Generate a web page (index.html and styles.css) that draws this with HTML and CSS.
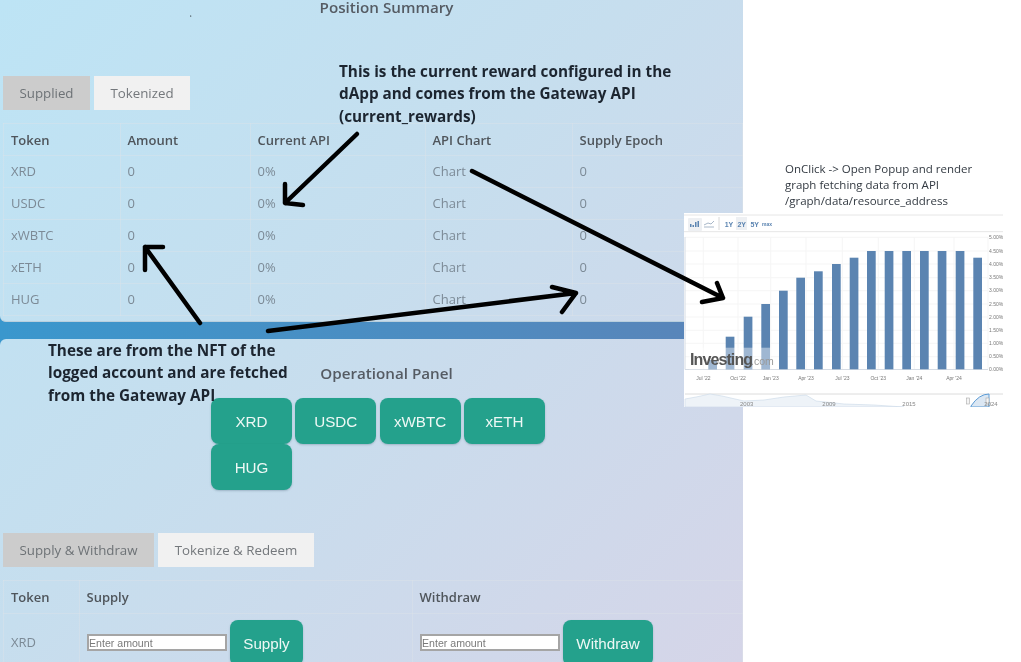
FILE: index.html
```html
<!DOCTYPE html>
<html lang="en">
<head>
<meta charset="utf-8">
<title>Position Summary</title>
<link rel="stylesheet" href="styles.css">
</head>
<body>
<div class="screen">
  <main class="app">
    <section class="card card-summary">
      <h2 class="card-title title-summary">Position Summary</h2>
      <div class="tabs">
        <button class="tab tab-active tab-supplied">Supplied</button>
        <button class="tab tab-tokenized">Tokenized</button>
      </div>
      <table class="grid">
        <colgroup><col class="c1"><col class="c2"><col class="c3"><col class="c4"><col></colgroup>
        <thead><tr><th>Token</th><th>Amount</th><th>Current API</th><th>API Chart</th><th>Supply Epoch</th></tr></thead>
        <tbody>
          <tr><td>XRD</td><td>0</td><td>0%</td><td>Chart</td><td>0</td></tr>
          <tr><td>USDC</td><td>0</td><td>0%</td><td>Chart</td><td>0</td></tr>
          <tr><td>xWBTC</td><td>0</td><td>0%</td><td>Chart</td><td>0</td></tr>
          <tr><td>xETH</td><td>0</td><td>0%</td><td>Chart</td><td>0</td></tr>
          <tr><td>HUG</td><td>0</td><td>0%</td><td>Chart</td><td>0</td></tr>
        </tbody>
      </table>
    </section>
    <section class="card card-ops">
      <h2 class="card-title title-ops">Operational Panel</h2>
      <div class="token-buttons">
        <button class="action token">XRD</button>
        <button class="action token">USDC</button>
        <button class="action token">xWBTC</button>
        <button class="action token">xETH</button>
        <button class="action token">HUG</button>
      </div>
      <div class="tabs tabs-ops">
        <button class="tab tab-active tab-supply">Supply &amp; Withdraw</button>
        <button class="tab tab-tokenize">Tokenize &amp; Redeem</button>
      </div>
      <table class="grid grid-ops">
        <colgroup><col class="o1"><col class="o2"><col></colgroup>
        <thead><tr><th>Token</th><th>Supply</th><th>Withdraw</th></tr></thead>
        <tbody>
          <tr>
            <td>XRD</td>
            <td><div class="entry"><input class="amount" type="text" placeholder="Enter amount"><button class="action act-supply">Supply</button></div></td>
            <td><div class="entry"><input class="amount" type="text" placeholder="Enter amount"><button class="action act-withdraw">Withdraw</button></div></td>
          </tr>
        </tbody>
      </table>
    </section>
  </main>

  <p class="note note-reward">This is the current reward configured in the<br>dApp and comes from the Gateway API<br>(current_rewards)</p>
  <p class="note note-nft">These are from the NFT of the<br>logged account and are fetched<br>from the Gateway API</p>
  <p class="note-click">OnClick -&gt; Open Popup and render<br>graph fetching data from API<br>/graph/data/resource_address</p>

  <svg class="chart" width="319" height="194" viewBox="0 0 319 194" aria-label="Interest rate bar chart">
    <rect width="319" height="194" fill="#fff"/>
    <path d="M0 2H319M0 18.700H319" stroke="#e6e6e6" stroke-width="1"/>
    <rect x="4" y="5" width="14" height="13" rx="1" fill="#eef0f3"/>
    <path d="M6 14V11H7.500V14ZM8.500 14V12H10V14ZM11 14V9H12.500V14ZM13.500 14V8H15V14Z" fill="#5b84b1"/>
    <path d="M20 14H30M20 12L24 10L27 11L30 8" stroke="#a9b8c9" stroke-width="1" fill="none"/>
    <path d="M35 4V17" stroke="#d8d8d8" stroke-width="1"/>
    <rect x="52" y="4" width="11" height="13" fill="#eef0f3"/>
    <g class="chart-tool">
      <text x="45" y="13.500" text-anchor="middle">1Y</text>
      <text x="57.700" y="13.500" text-anchor="middle">2Y</text>
      <text x="70.700" y="13.500" text-anchor="middle">5Y</text>
      <text class="chart-tool-small" x="83" y="13" text-anchor="middle">max</text>
    </g>
    <path class="chart-gridline" d="M1 24.300H304M1 38H304M1 51H304M1 64.700H304M1 77.700H304M1 91H304M1 104H304M1 117.300H304M1 130.300H304M1 143.700H304"/>
    <path class="chart-gridline" d="M19.300 24V156M54 24V156M86.700 24V156M122 24V156M158.300 24V156M194.300 24V156M230.300 24V156M270 24V156M304 24V156"/>
    <path d="M1 24V156.500H304" stroke="#d6dce4" stroke-width="1" fill="none"/>
    <g fill="#5b84b1">
      <rect x="24.300" y="147" width="8.700" height="9.300"/>
      <rect x="41.700" y="123.700" width="8.700" height="32.600"/>
      <rect x="59.700" y="103.700" width="8.700" height="52.600"/>
      <rect x="77.300" y="91" width="8.700" height="65.300"/>
      <rect x="95" y="77.700" width="8.700" height="78.600"/>
      <rect x="112.300" y="64.700" width="8.700" height="91.600"/>
      <rect x="130" y="58.300" width="8.700" height="98"/>
      <rect x="148" y="51" width="8.700" height="105.300"/>
      <rect x="165.700" y="44.700" width="8.700" height="111.600"/>
      <rect x="183" y="38" width="8.700" height="118.300"/>
      <rect x="200.700" y="38" width="8.700" height="118.300"/>
      <rect x="218.300" y="38" width="8.700" height="118.300"/>
      <rect x="236" y="38" width="8.700" height="118.300"/>
      <rect x="253.700" y="38" width="8.700" height="118.300"/>
      <rect x="271.700" y="38" width="8.700" height="118.300"/>
      <rect x="289.300" y="44.700" width="8.700" height="111.600"/>
    </g>
    <rect x="5" y="134.700" width="82" height="21.600" fill="#fff" fill-opacity=".42"/>
    <text class="logo" x="6" y="152">Investing</text>
    <text class="logo-com" x="67" y="152">.com</text>
    <g class="chart-axis" text-anchor="start">
      <text x="305" y="26">5.00%</text><text x="305" y="39.700">4.50%</text><text x="305" y="52.700">4.00%</text><text x="305" y="66.300">3.50%</text><text x="305" y="79.300">3.00%</text><text x="305" y="92.700">2.50%</text><text x="305" y="105.700">2.00%</text><text x="305" y="119">1.50%</text><text x="305" y="132">1.00%</text><text x="305" y="145.300">0.50%</text><text x="305" y="158">0.00%</text>
    </g>
    <g class="chart-axis" text-anchor="middle">
      <text x="19.300" y="167">Jul '22</text><text x="54" y="167">Oct '22</text><text x="86.700" y="167">Jan '23</text><text x="122" y="167">Apr '23</text><text x="158.300" y="167">Jul '23</text><text x="194.300" y="167">Oct '23</text><text x="230.300" y="167">Jan '24</text><text x="270" y="167">Apr '24</text>
    </g>
    <path d="M1 181H319" stroke="#dcdcdc" stroke-width="1"/>
    <path d="M1 186L12 184L26 181L38 183L60 188L80 187L100 184L122 182L132 188L160 191L190 192L220 194V194H1Z" fill="#eef3f8" stroke="#c9d8e8" stroke-width=".6"/>
    <path d="M287 193Q295 181 305 181V194H287Z" fill="#dbe7f3" stroke="#5b9bd5" stroke-width="1"/>
    <rect x="282.500" y="185" width="3" height="6" fill="#f4f4f4" stroke="#aaa" stroke-width=".6"/>
    <rect x="302" y="185" width="3" height="6" fill="#f4f4f4" stroke="#aaa" stroke-width=".6"/>
    <g class="chart-axis chart-nav" text-anchor="middle">
      <text x="62.700" y="193">2003</text><text x="145" y="193">2009</text><text x="225" y="193">2015</text><text x="307" y="193">2024</text>
    </g>
  </svg>

  <svg class="marks" width="1021" height="662" viewBox="0 0 1021 662" aria-hidden="true">
    <g class="arrow">
      <path d="M357 134L285 203M285 184V203L303 205"/>
      <path d="M200 323L145 247M145 270V247H163"/>
      <path d="M268 331L576 293M552 287L576 293L562 312"/>
      <path d="M472 171L723 298M717 283L723 298L702 302"/>
    </g>
    <circle cx="190.700" cy="16" r=".6" fill="#000"/>
  </svg>
</div>
</body>
</html>
```
FILE: styles.css
```css
* { box-sizing: border-box; }
html, body { margin: 0; height: 100%; background: #fff; }
.screen {
  position: relative;
  width: 1021px;
  height: 662px;
  overflow: hidden;
  background: #fff;
  font-family: "Open Sans", "Liberation Sans", sans-serif;
  filter: blur(.4px);
}
.app {
  width: 743px;
  height: 662px;
  overflow: hidden;
  background: linear-gradient(90deg, #3a97cd, #5b84b8);
}
.card {
  background: linear-gradient(135deg, #bde4f5 0%, #c6deee 45%, #d5d5e8 100%) 0 0 / 743px 662px fixed;
}
.card-summary {
  height: 322px;
  border-bottom: 1px solid #b9cfdd;
  border-radius: 0 0 6px 6px;
}
.card-ops {
  height: 323px;
  margin-top: 17px;
  border-radius: 6px 6px 0 0;
  overflow: hidden;
}
.card-title {
  margin: 0;
  text-align: center;
  font-size: 15.200px;
  font-weight: 600;
  color: #555b63;
}
.title-summary { line-height: 15px; margin-left: 30px; }
.title-ops { padding-top: 23px; line-height: 22px; margin-left: 30px; }
.tabs {
  display: flex;
  gap: 4px;
  margin: 61px 0 13px 3px;
}
.tabs-ops { margin-top: 43px; }
.tab {
  height: 34px;
  border: 0;
  padding: 0;
  background: #f1f1f1;
  color: #74787c;
  font: 400 13.300px "Open Sans", "Liberation Sans", sans-serif;
}
.tab-active { background: #cccccc; color: #6d7276; }
.tab-supplied { width: 87px; }
.tab-tokenized { width: 96px; }
.tab-supply { width: 151px; }
.tab-tokenize { width: 156px; }
.grid {
  width: 740px;
  margin-left: 3px;
  table-layout: fixed;
  border-collapse: collapse;
  font-size: 13px;
  color: #7c8a96;
}
.c1 { width: 117px; }
.c2 { width: 130px; }
.c3 { width: 175px; }
.c4 { width: 147px; }
.o1 { width: 76px; }
.o2 { width: 333px; }
.grid th, .grid td {
  height: 32px;
  padding: 0 6px 2px 6.500px;
  border: 1px solid rgba(222, 228, 232, .4);
  text-align: left;
  font-weight: 400;
}
.grid th:first-child, .grid td:first-child { padding-left: 7px; }
.grid th { font-weight: 600; color: #4f555b; padding-bottom: 0; }
.grid-ops th { height: 33px; padding-bottom: 0; }
.grid-ops td { height: 50px; padding: 6px 7px 0; vertical-align: top; }
.grid-ops td:first-child { padding: 19px 7px 0; }
.token-buttons {
  display: flex;
  flex-wrap: wrap;
  gap: 0 3.300px;
  width: 340px;
  margin: 14px 0 0 211px;
}
.action {
  height: 46px;
  border: 0;
  padding: 0;
  border-radius: 8px;
  background: #24a18c;
  color: #eef8f5;
  font: 400 15.200px "Liberation Sans", Arial, sans-serif;
  box-shadow: 0 1px 2px rgba(60, 90, 110, .3);
}
.token { width: 81px; }
.entry { display: flex; align-items: flex-start; gap: 3px; }
.amount {
  width: 140px;
  height: 17px;
  margin-top: 14px;
  padding: 0;
  border: 2px solid #a5a5a5;
  background: #fff;
  font: 400 10.600px "Liberation Sans", Arial, sans-serif;
  color: #333;
}
.amount::placeholder { color: #7a7a7a; opacity: 1; }
.act-supply { width: 73px; flex: none; }
.act-withdraw { width: 90px; flex: none; }

.note {
  position: absolute;
  margin: 0;
  font-size: 15.300px;
  font-weight: 700;
  line-height: 22.500px;
  color: #1c2530;
  white-space: nowrap;
}
.note-reward { left: 339px; top: 59.500px; }
.note-nft { left: 48px; top: 338.500px; }
.note-click {
  position: absolute;
  left: 785px;
  top: 161px;
  margin: 0;
  font-size: 11.500px;
  line-height: 16px;
  color: #333a42;
  white-space: nowrap;
}
.chart { position: absolute; left: 684px; top: 213px; filter: blur(.35px); }
.chart-gridline { stroke: #f5f5f5; stroke-width: 1; fill: none; }
.chart-tool { font: 700 7px "Liberation Sans", Arial, sans-serif; fill: #5b84b1; }
.chart-tool-small { font-size: 5px; }
.chart-axis { font: 400 5px "Liberation Sans", Arial, sans-serif; fill: #777; }
.chart-nav { font-size: 6px; fill: #888; }
.logo { font: 700 16px "Liberation Sans", Arial, sans-serif; fill: #555; letter-spacing: -.9px; }
.logo-com { font: 400 10.500px "Liberation Sans", Arial, sans-serif; fill: #999; }
.marks { position: absolute; left: 0; top: 0; pointer-events: none; }
.arrow path {
  fill: none;
  stroke: #000;
  stroke-width: 4.500;
  stroke-linecap: round;
  stroke-linejoin: round;
}
```
